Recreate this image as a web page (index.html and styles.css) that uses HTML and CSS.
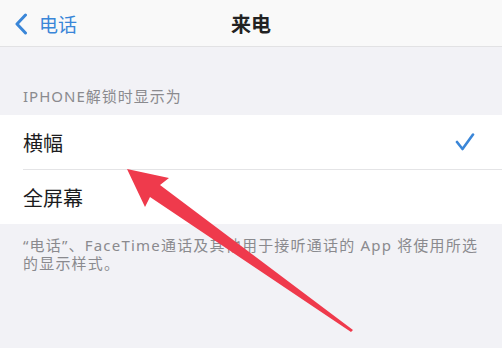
FILE: index.html
```html
<!DOCTYPE html>
<html lang="zh-CN">
<head>
    <meta charset="UTF-8">
    <meta name="viewport" content="width=device-width, initial-scale=1.0">
    <title>来电</title>
    <link rel="stylesheet" href="styles.css">
</head>
<body>
    <div class="screen">
        <div class="nav-bar">
            <a class="nav-back" href="#">
                <svg class="back-icon" width="14" height="22" viewBox="0 0 14 22">
                    <path d="M11.5 2 L3 11 L11.5 20" fill="none" stroke="#3a86d8" stroke-width="3" stroke-linecap="round" stroke-linejoin="round"/>
                </svg>
                <span>电话</span>
            </a>
            <div class="nav-title">来电</div>
        </div>

        <div class="section-header">IPHONE解锁时显示为</div>

        <div class="option-list">
            <div class="option-row">
                <span class="option-label">横幅</span>
                <svg class="check-icon" width="20" height="18" viewBox="0 0 20 18">
                    <path d="M2 9 L7.5 16 L18 1.5" fill="none" stroke="#3a86d8" stroke-width="2.6" stroke-linecap="round" stroke-linejoin="round"/>
                </svg>
            </div>
            <div class="option-row">
                <span class="option-label">全屏幕</span>
            </div>
        </div>

        <div class="section-footer">“电话”、FaceTime通话及其他用于接听通话的 App 将使用所选的显示样式。</div>

        <!-- 标注箭头 -->
        <svg class="annotation" width="502" height="348" viewBox="0 0 502 348">
            <polygon points="127,169 169,178 160,185 353,330 351,332 150,197 145,207" fill="#ef3a4c"/>
        </svg>
    </div>
</body>
</html>
```

FILE: styles.css
```css
html, body {
    margin: 0;
    padding: 0;
}
body {
    font-family: "Noto Sans", "Noto Sans CJK SC", sans-serif;
    background: #f2f2f6;
    width: 502px;
    height: 348px;
    overflow: hidden;
}
.screen {
    position: relative;
    height: 348px;
}
.nav-bar {
    height: 46px;
    background: #f9f9f9;
    border-bottom: 1px solid #e2e2e4;
    display: flex;
    align-items: center;
    justify-content: center;
    position: relative;
}
.nav-back {
    position: absolute;
    left: 14px;
    top: 10px;
    display: flex;
    align-items: center;
    gap: 11px;
    color: #3a86d8;
    text-decoration: none;
    font-size: 19px;
}
.nav-title {
    font-size: 20px;
    font-weight: 600;
    color: #222;
}
.section-header {
    padding: 39px 23px 9px;
    font-size: 15px;
    line-height: 20px;
    letter-spacing: 1px;
    color: #8a8a8e;
}
.option-list {
    background: #fff;
}
.option-row {
    height: 54px;
    margin-left: 23px;
    padding-right: 27px;
    display: flex;
    align-items: center;
    justify-content: space-between;
    border-bottom: 1px solid #e4e4e6;
}
.option-row:last-child {
    border-bottom: none;
}
.option-label {
    font-size: 20px;
    color: #1c1c1e;
}
.section-footer {
    padding: 12px 23px;
    font-size: 15px;
    line-height: 18px;
    letter-spacing: 1.2px;
    color: #8a8a8e;
}
.annotation {
    position: absolute;
    left: 0;
    top: 0;
    pointer-events: none;
}
```
